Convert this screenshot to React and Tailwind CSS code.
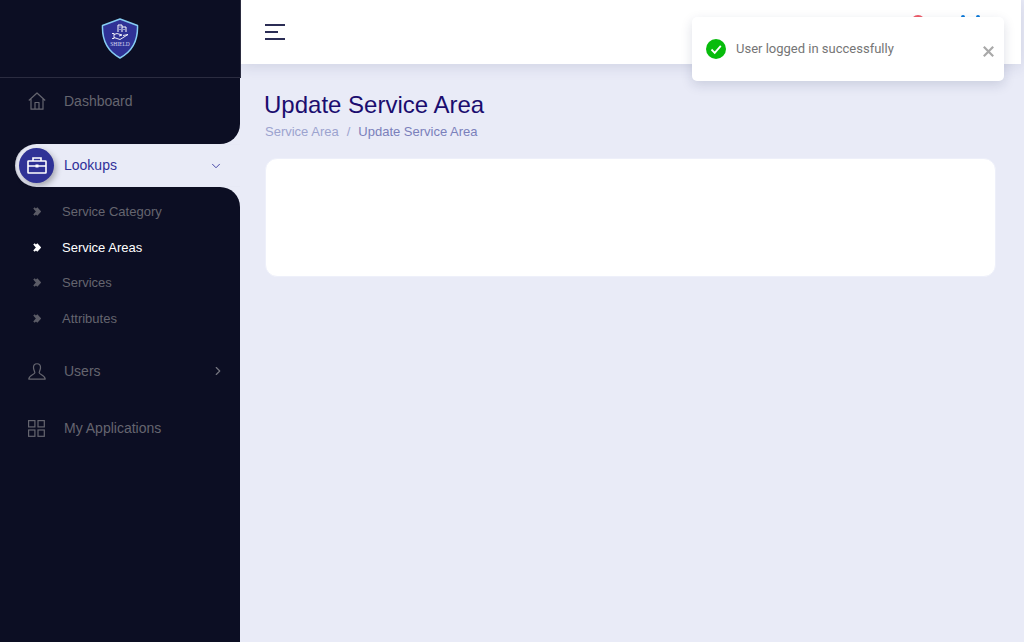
import { ChevronDown, ChevronRight } from 'lucide-react';

const font = { fontFamily: '"Liberation Sans", Arial, sans-serif' };

function ShieldLogo() {
  return (
    <svg width="38" height="41" viewBox="0 0 38 41" fill="none">
      <path d="M19 1 L36.5 7.5 C37 20 34 32 19 40 C4 32 1 20 1.5 7.5 Z" fill="#2f3296" stroke="#86ccf2" strokeWidth="1.5" strokeLinejoin="round" />
      <path d="M17 14 V7 H21 V14 M21 9 H25 V14 M18.5 9 H19.5 M18.5 11.5 H19.5 M22.5 11.5 H23.5" stroke="#fff" strokeWidth="1" />
      <path d="M11 15.5 H13 V20.5 H11 M13 16.5 L16 15.5 L21 17 L18 18 M13 19.5 L19 21.5 L27 16.5 L22 17.5" stroke="#fff" strokeWidth="0.9" strokeLinejoin="round" />
      <text x="19" y="28" textAnchor="middle" fontSize="5.5" fill="#d5d8f5" fontFamily="Liberation Serif, serif">SHIELD</text>
    </svg>
  );
}

function HomeIcon() {
  return (
    <svg width="18" height="18" viewBox="0 0 18 18" fill="none" stroke="#65656f" strokeWidth="1.2">
      <path d="M0.8 8.5 L9 1 L17.2 8.5 M3 7 V17.2 H15 V7 M7 17.2 V10.5 H11 V17.2" strokeLinejoin="round" />
    </svg>
  );
}

function UserIcon() {
  return (
    <svg width="18" height="17" viewBox="0 0 19 18" fill="none" stroke="#65656f" strokeWidth="1.3">
      <path d="M9.5 0.8 C6.8 0.8 5.6 2.8 5.8 5.2 C6 7.7 7.2 9 7.2 10.3 C7.2 12 1 12.8 0.8 17 H18.2 C18 12.8 11.8 12 11.8 10.3 C11.8 9 13 7.7 13.2 5.2 C13.4 2.8 12.2 0.8 9.5 0.8 Z" strokeLinejoin="round" />
    </svg>
  );
}

function GridIcon() {
  return (
    <svg width="17" height="17" viewBox="0 0 17 17" fill="none" stroke="#65656f" strokeWidth="1.2">
      <rect x="0.6" y="0.6" width="6.3" height="6.3" />
      <rect x="10" y="0.6" width="6.3" height="6.3" />
      <rect x="0.6" y="10" width="6.3" height="6.3" />
      <rect x="10" y="10" width="6.3" height="6.3" />
    </svg>
  );
}

function BagIcon() {
  return (
    <svg width="20" height="17" viewBox="0 0 20 17" fill="none" stroke="#fff" strokeWidth="1.6">
      <rect x="1" y="4" width="18" height="12" rx="0.5" />
      <path d="M6 4 V1 H14 V4 M1 9 H19" />
      <rect x="8.5" y="7.5" width="3" height="3" fill="#fff" stroke="none" />
    </svg>
  );
}

function SubArrow({ active }) {
  const color = active ? '#ffffff' : '#5b5b66';
  return (
    <svg width="8" height="9" viewBox="0 0 8 9" fill="none" stroke={color} strokeWidth="2">
      <path d="M1 0.8 L4.2 4.5 L1 8.2 M3.6 0.8 L6.8 4.5 L3.6 8.2" />
    </svg>
  );
}

function SubItem({ label, active }) {
  return (
    <div className="flex h-[35.5px] items-center pl-[33px]">
      <SubArrow active={active} />
      <span className={`ml-[21px] text-[13px] ${active ? 'text-white' : 'text-[#65656f]'}`}>{label}</span>
    </div>
  );
}

function Sidebar() {
  return (
    <aside className="relative z-10 flex w-[240px] shrink-0 flex-col bg-[#e9ebf7]">
      <div className="flex h-[78px] w-[241px] shrink-0 justify-center border-r border-b border-[#2b2c40] bg-[#0c0e23] pt-[18px]">
        <ShieldLogo />
      </div>

      <div className="h-[66px] rounded-br-[20px] bg-[#0c0e23] pl-[28px] pt-[14px]">
        <div className="flex h-[18px] items-center">
          <HomeIcon />
          <span className="ml-[18px] text-sm text-[#65656f]">Dashboard</span>
        </div>
      </div>

      <div className="h-[43px] bg-[#0c0e23] pl-[15px]">
        <div className="flex h-full items-center rounded-l-full bg-[#e9ebf7] pl-[4px] pr-[17px] shadow-[inset_2px_0_2px_-1px_rgba(0,0,0,0.18)]">
          <div className="flex h-[35px] w-[35px] items-center justify-center rounded-full bg-[#2f3296] shadow-[2px_3px_6px_rgba(0,0,0,0.3)]">
            <BagIcon />
          </div>
          <span className="ml-[10px] -mt-[2px] text-sm text-[#30309a]">Lookups</span>
          <ChevronDown className="ml-auto text-[#30309a]" size={14} strokeWidth={1.5} />
        </div>
      </div>

      <div className="flex flex-1 flex-col rounded-tr-[20px] bg-[#0c0e23] pt-[7px]">
        <SubItem label="Service Category" />
        <SubItem label="Service Areas" active />
        <SubItem label="Services" />
        <SubItem label="Attributes" />

        <div className="mt-[25px] flex h-[20px] items-center pl-[28px] pr-[15px]">
          <UserIcon />
          <span className="ml-[18px] text-sm text-[#65656f]">Users</span>
          <ChevronRight className="ml-auto text-[#75757f]" size={14} strokeWidth={2} />
        </div>

        <div className="mt-[37px] flex h-[20px] items-center pl-[28px]">
          <GridIcon />
          <span className="ml-[19px] text-sm text-[#65656f]">My Applications</span>
        </div>
      </div>
    </aside>
  );
}

function Toast() {
  return (
    <div className="absolute left-[692px] top-[17px] z-20 flex h-[64px] w-[312px] rounded-[5px] bg-white pl-[14px] pt-[22px] shadow-[0_4px_12px_rgba(30,40,90,0.15)]">
      <svg width="20" height="20" viewBox="0 0 20 20" className="shrink-0">
        <circle cx="10" cy="10" r="10" fill="#07bc0c" />
        <path d="M5.5 10.5 L8.7 13.8 L14.8 6.8" fill="none" stroke="#fff" strokeWidth="1.8" />
      </svg>
      <span className="ml-[10px] text-[13px] leading-[19px] text-[#757575]" style={{ fontFamily: 'Roboto, sans-serif' }}>
        User logged in successfully
      </span>
      <svg width="11" height="11" viewBox="0 0 11 11" className="absolute left-[291px] top-[29px]">
        <path d="M0.8 0.8 L10.2 10.2 M10.2 0.8 L0.8 10.2" stroke="#a9a9a9" strokeWidth="2.2" />
      </svg>
    </div>
  );
}

export default function App() {
  return (
    <div className="relative flex h-screen w-full overflow-hidden bg-[#e9ebf7]" style={font}>
      <Sidebar />
      <main className="flex min-w-0 flex-1 flex-col">
        <header className="mr-[3px] flex h-[64px] shrink-0 items-center bg-white pl-[25px] pr-[41px] shadow-[0_2px_14px_rgba(40,50,100,0.14)]">
          <div className="flex w-[20px] flex-col gap-[5px]">
            <span className="h-[2px] w-[20px] bg-[#2b2d55]" />
            <span className="h-[2px] w-[13px] bg-[#2b2d55]" />
            <span className="h-[2px] w-[20px] bg-[#2b2d55]" />
          </div>
          <div className="ml-auto flex items-start gap-[36px] self-start pt-[15px]">
            <span className="h-[14px] w-[14px] rounded-full bg-[#ef5a68]" />
            <div className="flex gap-[11px]">
              <span className="h-[6px] w-[4px] rounded-full bg-[#0a78d8]" />
              <span className="h-[6px] w-[4px] rounded-full bg-[#0a78d8]" />
            </div>
          </div>
        </header>
        <div className="pl-[25px] pr-[28px] pt-[27px]">
          <h1 className="-ml-px text-2xl leading-[28px] text-[#1b0d6f]">Update Service Area</h1>
          <div className="mt-[5px] flex text-[13px] leading-[15px]">
            <span className="text-[#9ca3cf]">Service Area</span>
            <span className="mx-[8px] text-[#9ca3cf]">/</span>
            <span className="text-[#7a80bb]">Update Service Area</span>
          </div>
          <div className="mt-[19px] h-[119px] rounded-[12px] border border-[#eef0fa] bg-white" />
        </div>
      </main>
      <Toast />
    </div>
  );
}
